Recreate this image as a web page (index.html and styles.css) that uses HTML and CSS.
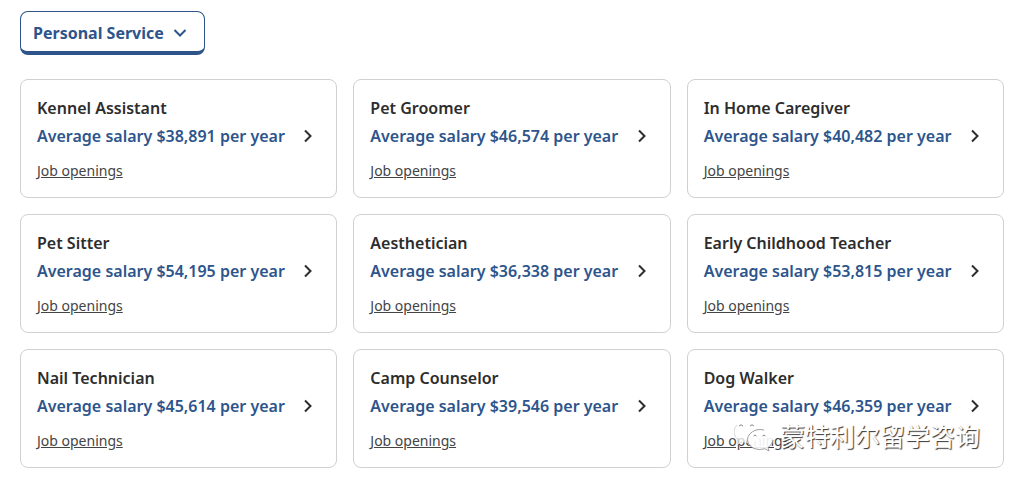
FILE: index.html
```html
<!DOCTYPE html>
<html lang="en">
<head>
<meta charset="utf-8">
<meta name="viewport" content="width=device-width, initial-scale=1">
<title>Personal Service salaries</title>
<link rel="stylesheet" href="styles.css">
</head>
<body>
<svg class="sprite" aria-hidden="true">
  <symbol id="chevron" viewBox="0 0 10 14"><path d="M2 1.500l5.500 5.500-5.500 5.500" fill="none" stroke="currentColor" stroke-width="2"/></symbol>
</svg>
<main class="page">
  <button class="category" type="button" aria-haspopup="listbox">Personal Service
    <svg class="category-icon" viewBox="0 0 14 10" aria-hidden="true"><path d="M1.500 2l5.500 5.500L12.500 2" fill="none" stroke="currentColor" stroke-width="2"/></svg>
  </button>
  <ul class="jobs">
    <li class="card"><div class="info"><h2 class="title">Kennel Assistant</h2><a class="salary" href="#kennel">Average salary $38,891 per year</a><a class="openings" href="#kennel-jobs">Job openings</a></div><svg class="chevron" aria-hidden="true"><use href="#chevron"/></svg></li>
    <li class="card"><div class="info"><h2 class="title">Pet Groomer</h2><a class="salary" href="#groomer">Average salary $46,574 per year</a><a class="openings" href="#groomer-jobs">Job openings</a></div><svg class="chevron" aria-hidden="true"><use href="#chevron"/></svg></li>
    <li class="card"><div class="info"><h2 class="title">In Home Caregiver</h2><a class="salary" href="#caregiver">Average salary $40,482 per year</a><a class="openings" href="#caregiver-jobs">Job openings</a></div><svg class="chevron" aria-hidden="true"><use href="#chevron"/></svg></li>
    <li class="card"><div class="info"><h2 class="title">Pet Sitter</h2><a class="salary" href="#sitter">Average salary $54,195 per year</a><a class="openings" href="#sitter-jobs">Job openings</a></div><svg class="chevron" aria-hidden="true"><use href="#chevron"/></svg></li>
    <li class="card"><div class="info"><h2 class="title">Aesthetician</h2><a class="salary" href="#aesthetician">Average salary $36,338 per year</a><a class="openings" href="#aesthetician-jobs">Job openings</a></div><svg class="chevron" aria-hidden="true"><use href="#chevron"/></svg></li>
    <li class="card"><div class="info"><h2 class="title">Early Childhood Teacher</h2><a class="salary" href="#teacher">Average salary $53,815 per year</a><a class="openings" href="#teacher-jobs">Job openings</a></div><svg class="chevron" aria-hidden="true"><use href="#chevron"/></svg></li>
    <li class="card"><div class="info"><h2 class="title">Nail Technician</h2><a class="salary" href="#nails">Average salary $45,614 per year</a><a class="openings" href="#nails-jobs">Job openings</a></div><svg class="chevron" aria-hidden="true"><use href="#chevron"/></svg></li>
    <li class="card"><div class="info"><h2 class="title">Camp Counselor</h2><a class="salary" href="#camp">Average salary $39,546 per year</a><a class="openings" href="#camp-jobs">Job openings</a></div><svg class="chevron" aria-hidden="true"><use href="#chevron"/></svg></li>
    <li class="card"><div class="info"><h2 class="title">Dog Walker</h2><a class="salary" href="#walker">Average salary $46,359 per year</a><a class="openings" href="#walker-jobs">Job openings</a></div><svg class="chevron" aria-hidden="true"><use href="#chevron"/></svg>
      <div class="watermark" lang="zh">
        <svg class="watermark-logo" viewBox="0 0 42 34" aria-hidden="true">
          <path d="M14 2C6 2-.5 7-.5 13.500c0 4 2 7 5 9l-1 4 5-2.500c2 .7 4 1 6 1 8 0 14-5 14-11.500S22 2 14 2z" fill="#fff" fill-opacity=".75"/>
          <path d="M3 7q-3 3-3 7 0 5 5 9l-1 3 4-2" fill="none" stroke="#ccc" stroke-width=".8"/>
          <path d="M26 11.500c-7 0-12.500 4.500-12.500 10S19 31.500 26 31.500c2 0 3-.3 5-.8l4 2.300-1-3.500c3-2 5-4.500 5-8 0-5.500-6-10-13-10z" fill="#fff" fill-opacity=".9"/>
          <path d="M30 12q-4-1-8 0-8 3-8.500 9.500Q14 28 20 30.500q5 2 11 .2l4 2.300-1-3.500q5-3.500 5-7.500" fill="none" stroke="#888" stroke-width=".8"/>
          <path d="M5 8q2-2.500 4 0M16 8q2-2.500 4 0M19.500 18q1.500-2 3 0M28.500 18q1.500-2 3 0" fill="none" stroke="#888"/>
        </svg>
        <span class="watermark-text">蒙特利尔留学咨询</span>
      </div>
    </li>
  </ul>
</main>
</body>
</html>
```
FILE: styles.css
```css
* { box-sizing: border-box; }

body {
  margin: 0;
  background: #fff;
  color: #2d2d2d;
  font-family: "Noto Sans", "Noto Sans CJK SC", sans-serif;
  font-size: 16px;
}

.sprite { display: none; }

.page { padding: 11px 9px 13px 20px; }

.category {
  display: flex;
  align-items: center;
  gap: 9px;
  height: 44px;
  padding: 2px 17px 0 12px;
  border: 1px solid #2d558c;
  border-bottom-width: 4px;
  border-radius: 8px;
  background: #fff;
  color: #2d558c;
  font: inherit;
  font-weight: 700;
}

.category-icon { width: 14px; height: 10px; }

.jobs {
  display: grid;
  grid-template-columns: repeat(3, 1fr);
  gap: 16px;
  margin: 24px 0 0;
  padding: 0;
  list-style: none;
}

.card {
  position: relative;
  display: flex;
  align-items: center;
  justify-content: space-between;
  padding: 14px 23px 15px 16px;
  border: 1px solid #d0d0d0;
  border-radius: 8px;
}

.info {
  display: flex;
  flex-direction: column;
  align-items: flex-start;
}

.title {
  margin: 0;
  font-size: 16px;
  font-weight: 600;
  line-height: 28px;
}

.salary {
  color: #2d558c;
  font-weight: 600;
  line-height: 28px;
  text-decoration: none;
}

.openings {
  margin-top: 9px;
  color: #444;
  font-size: 14px;
  line-height: 23px;
}

.chevron {
  flex: none;
  width: 10px;
  height: 14px;
  margin-bottom: 4px;
}

.watermark {
  position: absolute;
  right: 23px;
  bottom: 14px;
  display: flex;
  align-items: center;
  gap: 4px;
  pointer-events: none;
}

.watermark-logo { width: 42px; height: 34px; }

.watermark-text {
  color: #fff;
  font-family: "Noto Sans CJK SC", sans-serif;
  font-size: 25px;
  line-height: 36px;
  text-shadow: 1px 1px 1px #333;
}
```
